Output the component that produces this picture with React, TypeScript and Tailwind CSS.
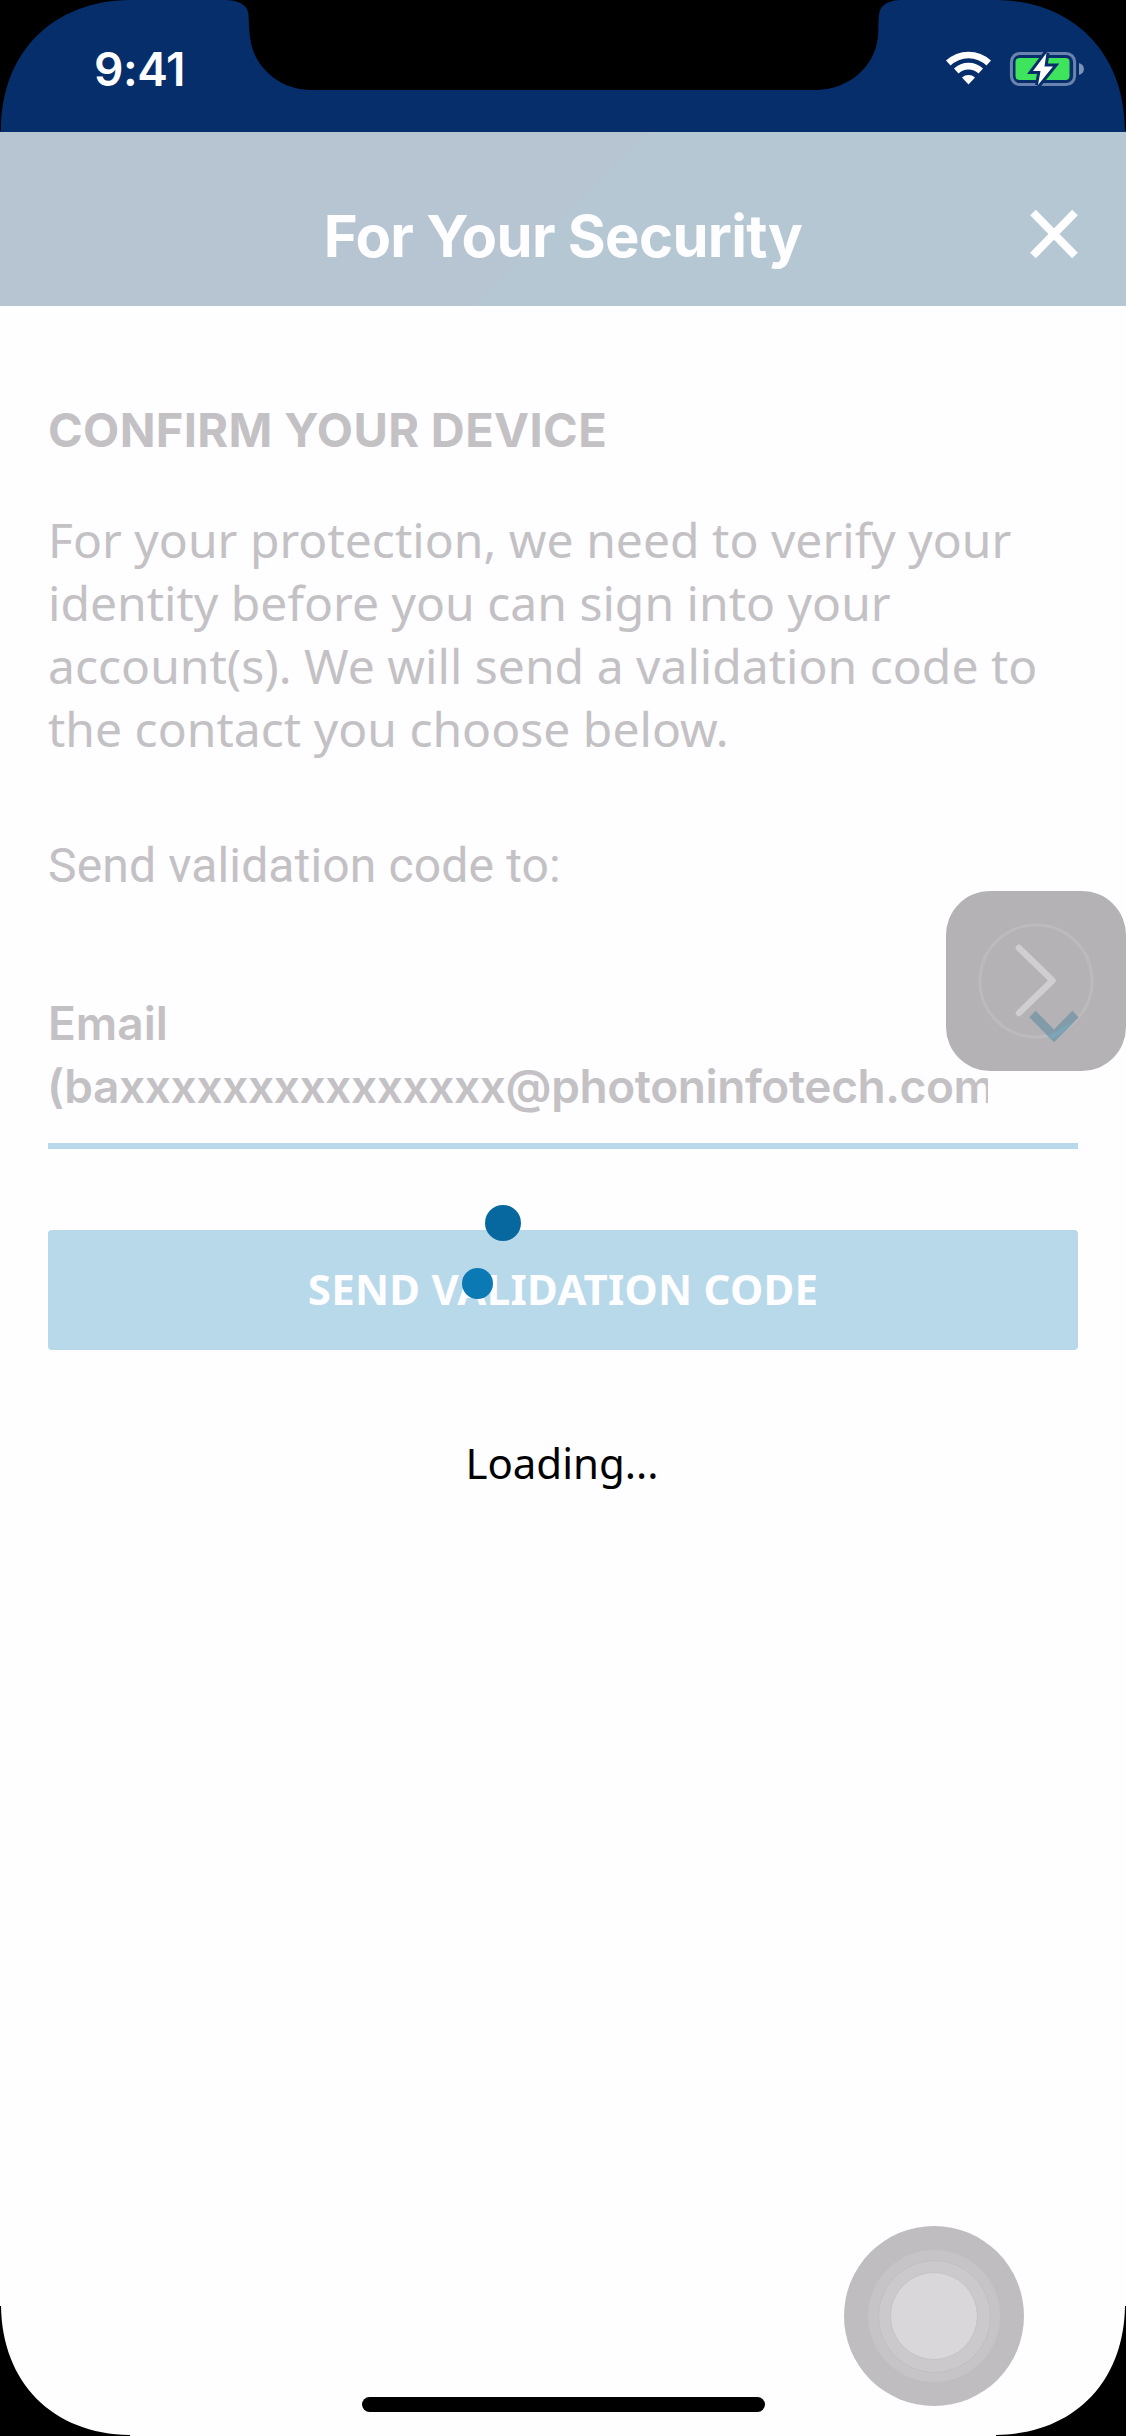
function WifiIcon() {
  return (
    <svg className="h-[35px] w-[47px]" viewBox="0 0 47 35" fill="#fefeff">
      <path d="M1 9.500 A33 33 0 0 1 46 9.500 L41.500 14.500 A26 26 0 0 0 5.500 14.500 Z" />
      <path d="M9 17.500 A21.500 21.500 0 0 1 38 17.500 L33.500 22.500 A14.500 14.500 0 0 0 13.500 22.500 Z" />
      <path d="M17 26.500 A10 10 0 0 1 30 26.500 L23.500 33.500 Z" />
    </svg>
  );
}

function BatteryIcon() {
  return (
    <svg className="h-[38px] w-[75px]" viewBox="0 0 75 38">
      <rect x="2.400" y="3.400" width="63.200" height="31.200" rx="8.500" fill="none" stroke="#6b84af" strokeWidth="3" />
      <rect x="6.500" y="8" width="54" height="22" rx="4" fill="#3ee55c" />
      <path d="M70 13 A8 6.500 0 0 1 70 25 Z" fill="#7d94ba" />
      <path d="M37.500 3 L24 21 L31.500 21 L29 35 L44 16.500 L35.500 16.500 Z" fill="#fefeff" stroke="#052e6b" strokeWidth="6" />
      <path d="M37.500 3 L24 21 L31.500 21 L29 35 L44 16.500 L35.500 16.500 Z" fill="#fefeff" />
    </svg>
  );
}

function Bezel() {
  return (
    <>
      <svg className="absolute left-0 top-0 h-[132px] w-full" viewBox="0 0 1126 132">
        <path d="M0 0 H129 C55 1 1 50 1 131 H0 Z" />
        <path d="M997 0 H1126 V131 H1125 C1125 52 1072 1 997 0 Z" />
        <path d="M227 0 C241 1 248 6 248.500 15 C249 24 249 30 250 37 C253 66 278 89 309 90 H817 C850 89 875 66 878 37 C878.500 30 878 24 879 15 C880 6 886 1 900 0 Z" />
      </svg>
      <svg className="absolute bottom-0 left-0 h-[132px] w-full" viewBox="0 0 1126 132">
        <path d="M0 132 V2 H1 C2 78 52 130 130 131 V132 Z" />
        <path d="M1126 132 V2 H1125 C1124 78 1074 130 996 131 V132 Z" />
      </svg>
    </>
  );
}

function NextOverlay() {
  return (
    <div className="absolute left-[946px] top-[891px] h-[180px] w-[180px] rounded-[44px] bg-[#b4b2b5]">
      <svg className="h-full w-full" viewBox="0 0 180 180" fill="none">
        <circle cx="90" cy="90" r="56" stroke="#bcbabd" strokeWidth="3" />
        <path d="M73 57 L106.500 89.500 L73 122" stroke="#d0ced1" strokeWidth="6.500" strokeLinecap="round" strokeLinejoin="round" />
        <path d="M86.500 123 L108 144.800 L129.500 123" stroke="#829ba8" strokeWidth="9" />
        <path d="M104.500 148 Q116 144 126 133 L120 134 Q111 141 102 145 Z" fill="#7ba6b9" />
      </svg>
    </div>
  );
}

function AssistiveTouch() {
  return (
    <div className="absolute left-[844px] top-[2226px] flex h-[180px] w-[180px] items-center justify-center rounded-full bg-[#bfbdc0]">
      <div className="flex h-[132px] w-[132px] items-center justify-center rounded-full bg-[#c6c4c7]">
        <div className="flex h-[113px] w-[113px] items-center justify-center rounded-full border border-[#c1bfc2] bg-[#cbc9cc]">
          <div className="h-[88px] w-[88px] rounded-full border border-[#c5c3c6] bg-[#d9d7da]" />
        </div>
      </div>
    </div>
  );
}

export default function App() {
  return (
    <div className="relative flex h-[2436px] w-[1126px] flex-col overflow-hidden bg-[#fefdff]">
      <div className="flex h-[132px] shrink-0 items-center justify-between bg-[#052e6b] pl-[94px] pr-[42px] pt-[5px]">
        <span className="font-['Inter',sans-serif] text-[46px] font-semibold leading-none tracking-[-0.4px] text-[#fefeff]">9:41</span>
        <div className="flex items-center gap-[17px]">
          <WifiIcon />
          <BatteryIcon />
        </div>
      </div>

      <header className="relative flex h-[174px] shrink-0 items-center justify-center bg-[linear-gradient(135deg,#b7c4d1_0_50%,#b6c7d4_50%_100%)] pt-[34px]">
        <h1 className="font-['Inter',sans-serif] text-[58px] font-bold leading-none tracking-[-0.7px] text-[#fefdff]">For Your Security</h1>
        <svg className="absolute right-[47px] top-[77px] h-[50px] w-[50px]" viewBox="0 0 50 50" stroke="#fefdff" strokeWidth="8">
          <path d="M4 3.500 L46 46.500 M46 3.500 L4 46.500" />
        </svg>
      </header>

      <main className="flex flex-col px-[48px] pt-[92px]">
        <h2 className="font-['Inter',sans-serif] text-[47px] font-bold leading-[64px] tracking-[0.35px] text-[#c3c1c4]">CONFIRM YOUR DEVICE</h2>
        <p className="mt-[46px] whitespace-nowrap font-['Noto_Sans',sans-serif] text-[48px] leading-[63px] tracking-[0.02px] text-[#c3c1c4]">
          For your protection, we need to verify your
          <br />
          identity before you can sign into your
          <br />
          account(s). We will send a validation code to
          <br />
          the contact you choose below.
        </p>
        <p className="mt-[74px] font-['Roboto',sans-serif] text-[48px] leading-[64px] tracking-[0.15px] text-[#c3c1c4]">Send validation code to:</p>
        <div className="mt-[94px] border-b-[6px] border-[#b7d9ea] pb-[25px]">
          <div className="w-[940px] overflow-hidden whitespace-nowrap font-['Inter',sans-serif] text-[46px] font-semibold leading-[63px] text-[#c3c1c4]">
            <div>Email</div>
            <div className="-ml-px tracking-[-0.4px]">(baxxxxxxxxxxxxxxx@photoninfotech.com)</div>
          </div>
        </div>
        <button className="mt-[81px] flex h-[120px] items-center justify-center rounded-[4px] bg-[#b7d9ea] pb-[3px] font-['Noto_Sans',sans-serif] text-[42px] font-bold tracking-[0.25px] text-[#fefdff]">
          SEND VALIDATION CODE
        </button>
        <p className="mt-[83px] pr-[2px] text-center font-['Noto_Sans',sans-serif] text-[42px] leading-[60px] text-black">Loading...</p>
      </main>

      <div className="absolute left-[484.500px] top-[1205px] h-[36px] w-[36px] rounded-full bg-[#07689f]" />
      <div className="absolute left-[462px] top-[1268px] h-[31px] w-[31px] rounded-full bg-[#0b79b4]" />

      <NextOverlay />
      <AssistiveTouch />

      <div className="absolute left-[362px] top-[2397px] h-[15px] w-[403px] rounded-full bg-black" />
      <Bezel />
    </div>
  );
}
